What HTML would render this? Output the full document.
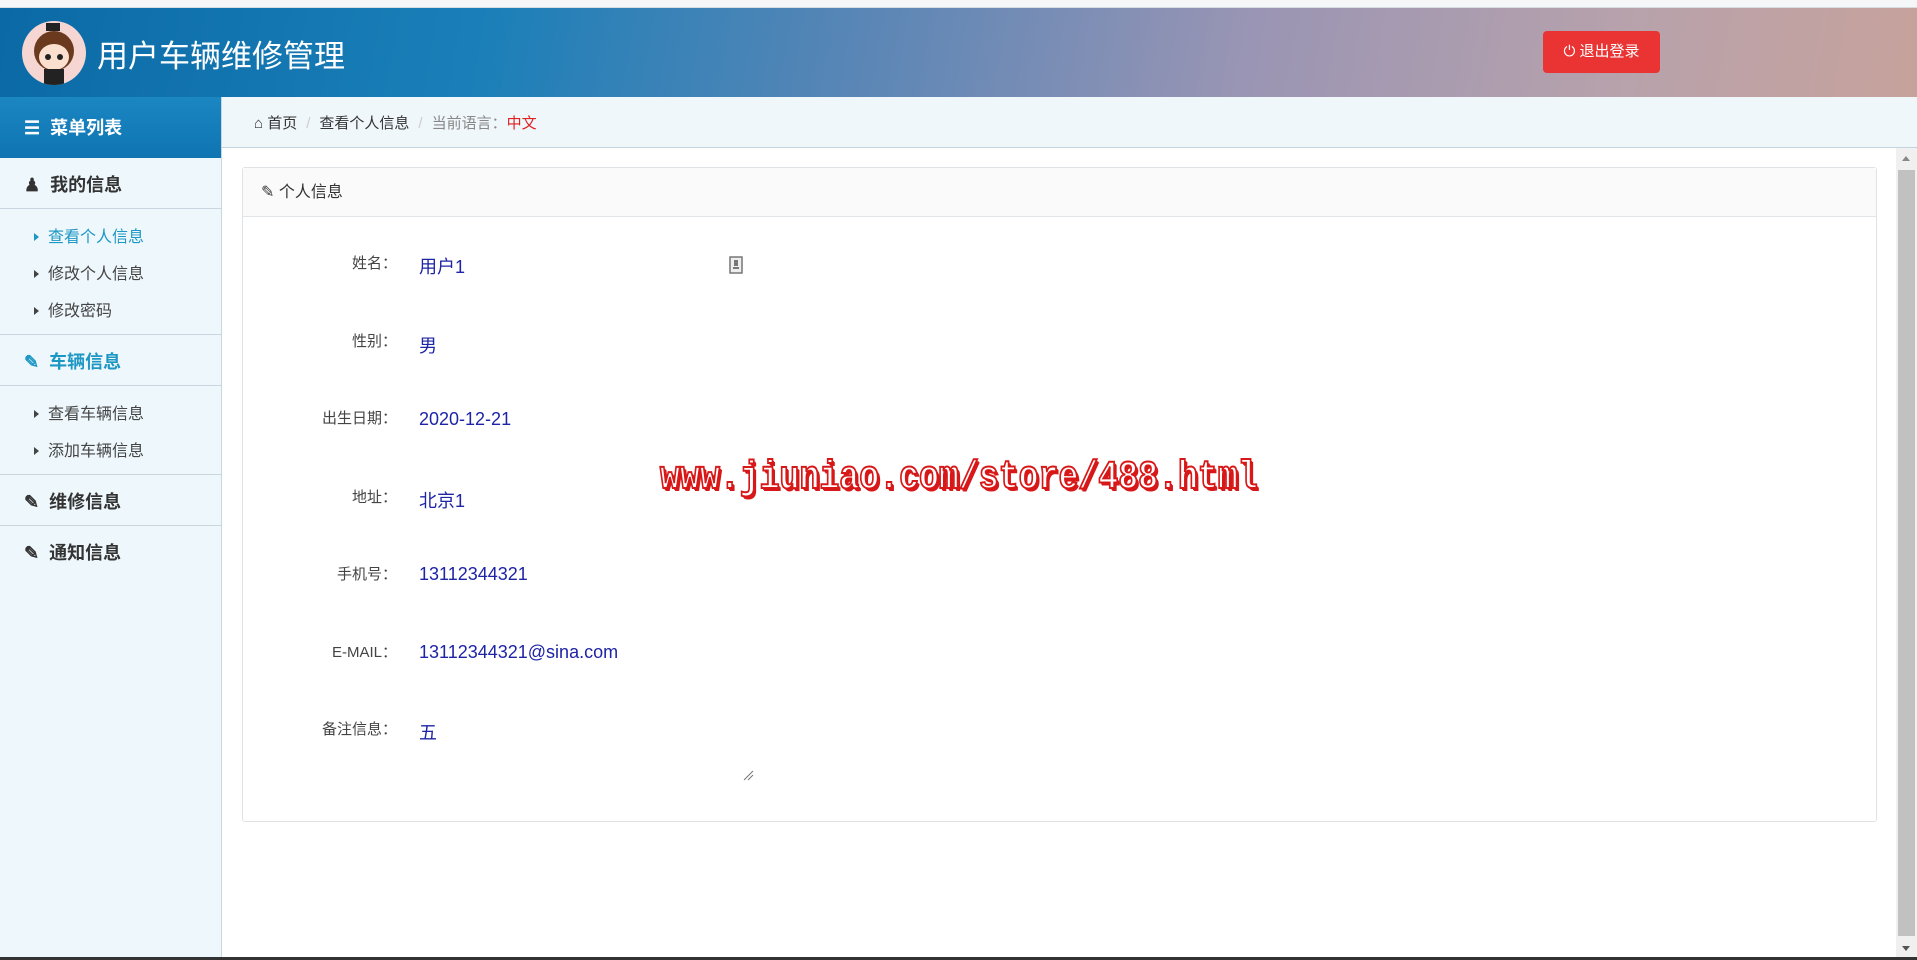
<!DOCTYPE html>
<html><head><meta charset="utf-8"><style>
*{margin:0;padding:0;box-sizing:border-box}
body{width:1917px;height:960px;overflow:hidden;background:#fff;font-family:"Liberation Sans","Noto Sans CJK SC",sans-serif;position:relative}
.topstrip{position:absolute;left:0;top:0;width:1917px;height:8px;background:#f4f6f8;border-bottom:1px solid #d8dde2}
.header{position:absolute;left:0;top:8px;width:1917px;height:89px;background:linear-gradient(100deg,#0b6aa6 0%,#1a7fb8 25%,#5a86b6 45%,#9a95b4 65%,#b8a2ab 85%,#c7a29c 100%)}
.logo{position:absolute;left:22px;top:13px;width:64px;height:64px;border-radius:50%;background:#f5d6d2;overflow:hidden}
.title{position:absolute;left:97px;top:23px;color:#fff;font-size:31px;font-family:"Noto Sans CJK SC",sans-serif}
.logout{position:absolute;left:1543px;top:23px;width:117px;height:42px;background:#ea3333;border-radius:4px;color:#fff;font-size:15px;line-height:42px;text-align:center}
.side{position:absolute;left:0;top:97px;width:222px;height:860px;background:#eef7fc;border-right:1px solid #c9d6e0}
.menuhead{height:61px;background:linear-gradient(180deg,#1a86c2,#0f75b2);color:#fff;font-weight:bold;font-size:18px;line-height:63px;padding-left:24px}
.grp{height:51px;line-height:55px;font-weight:bold;font-size:18px;color:#333;padding-left:24px;border-bottom:1px solid #c9d6e0}
.grp.blue{color:#1d97c4}
.subs{border-bottom:1px solid #c9d6e0;padding:10px 0 4px}
.sub{height:37px;line-height:37px;font-size:16px;color:#444;padding-left:34px}
.sub.act{color:#1d97c4}
.sub:before{content:"";display:inline-block;border-left:5px solid currentColor;border-top:4px solid transparent;border-bottom:4px solid transparent;margin-right:9px;vertical-align:1px}
.crumb{position:absolute;left:222px;top:97px;width:1695px;height:51px;background:#f0f7fb;border-bottom:1px solid #c5d3de;font-size:15px;line-height:53px;padding-left:32px;color:#333}
.crumb .sep{color:#ccc;margin:0 9px}
.panel{position:absolute;left:242px;top:167px;width:1635px;height:655px;border:1px solid #dfe3e6;border-radius:3px}
.phead{height:49px;background:#fafafa;border-bottom:1px solid #e3e6e9;font-size:16px;line-height:50px;padding-left:18px;color:#333}
.L{position:absolute;width:150px;left:247px;text-align:right;font-size:15px;color:#444}
.V{position:absolute;left:419px;font-size:18px;color:#1d24a5}
.scroll{position:absolute;left:1896px;top:148px;width:21px;height:809px;background:#f0f0f0}
.thumb{position:absolute;left:2px;top:22px;width:17px;height:766px;background:#c1c1c1}
.bottom{position:absolute;left:0;top:957px;width:1917px;height:3px;background:#333}
.wm{position:absolute;left:660px;top:456px;font-family:"Liberation Mono",monospace;font-weight:bold;font-size:40px;color:#fff;-webkit-text-stroke:2px #d81818;text-shadow:2px 2px 0 #d81818,3px 3px 0 #d81818;transform:scaleX(0.83);transform-origin:left top;white-space:nowrap}
</style></head><body>
<div class="topstrip"></div>
<div class="header">
 <div class="logo"><svg width="64" height="64"><circle cx="32" cy="30" r="20" fill="#6b3a1e"/><ellipse cx="32" cy="36" rx="15" ry="13" fill="#fbe0cf"/><rect x="24" y="2" width="14" height="8" fill="#222"/><circle cx="26" cy="36" r="3" fill="#222"/><circle cx="38" cy="36" r="3" fill="#222"/><rect x="22" y="48" width="20" height="16" fill="#222"/></svg></div>
 <div class="title">用户车辆维修管理</div>
 <div class="logout">⏻ 退出登录</div>
</div>
<div class="side">
 <div class="menuhead">☰ &nbsp;菜单列表</div>
 <div class="grp">&#9823; &nbsp;我的信息</div>
 <div class="subs"><div class="sub act">查看个人信息</div><div class="sub">修改个人信息</div><div class="sub">修改密码</div></div>
 <div class="grp blue">✎ &nbsp;车辆信息</div>
 <div class="subs"><div class="sub">查看车辆信息</div><div class="sub">添加车辆信息</div></div>
 <div class="grp">✎ &nbsp;维修信息</div>
 <div class="grp" style="border-bottom:none">✎ &nbsp;通知信息</div>
</div>
<div class="crumb">&#8962; 首页<span class="sep">/</span>查看个人信息<span class="sep">/</span><span style="color:#888">当前语言：</span><span style="color:#d22">中文</span></div>
<div class="panel">
 <div class="phead">✎ 个人信息</div>
</div>
<div class="L" style="top:252px">姓名：</div><div class="V" style="top:253px">用户1</div>
<div class="L" style="top:330px">性别：</div><div class="V" style="top:332px">男</div>
<div class="L" style="top:407px">出生日期：</div><div class="V" style="top:409px">2020-12-21</div>
<div class="L" style="top:486px">地址：</div><div class="V" style="top:487px">北京1</div>
<div class="L" style="top:563px">手机号：</div><div class="V" style="top:564px">13112344321</div>
<div class="L" style="top:641px">E-MAIL：</div><div class="V" style="top:642px">13112344321@sina.com</div>
<div class="L" style="top:718px">备注信息：</div><div class="V" style="top:719px">五</div>
<svg style="position:absolute;left:729px;top:256px" width="14" height="18"><rect x="1" y="1" width="12" height="16" fill="#eee" stroke="#777" stroke-width="1.5"/><rect x="5" y="4" width="4" height="6" fill="#777"/><rect x="4" y="11" width="6" height="2" fill="#777"/></svg>
<svg style="position:absolute;left:742px;top:769px" width="12" height="12"><path d="M2 11L11 2M6 11L11 6" stroke="#777" stroke-width="1"/></svg>
<div class="wm">www.jiuniao.com/store/488.html</div>
<div class="scroll"><div style="position:absolute;left:6px;top:8px;border-bottom:5px solid #888;border-left:4px solid transparent;border-right:4px solid transparent"></div><div class="thumb"></div><div style="position:absolute;left:6px;bottom:6px;border-top:5px solid #555;border-left:4px solid transparent;border-right:4px solid transparent"></div></div>
<div class="bottom"></div>
</body></html>
